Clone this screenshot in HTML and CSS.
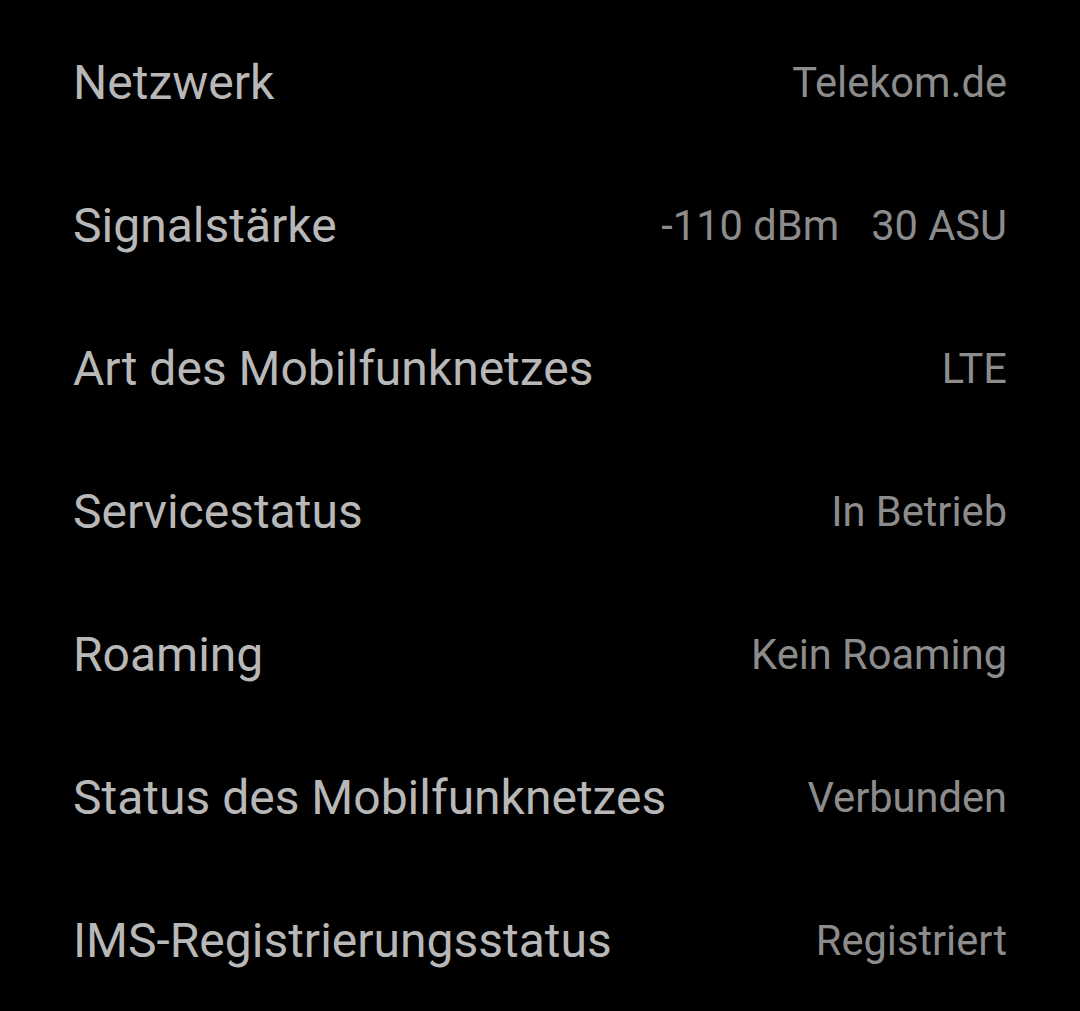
FILE: index.html
```html
<!DOCTYPE html>
<html lang="de">
<head>
  <meta charset="UTF-8">
  <meta name="viewport" content="width=device-width, initial-scale=1.0">
  <title>Status</title>
  <link rel="stylesheet" href="styles.css">
</head>
<body>
  <div class="list">
    <div class="row">
      <span class="label">Netzwerk</span>
      <span class="value">Telekom.de</span>
    </div>
    <div class="row">
      <span class="label">Signalstärke</span>
      <span class="value"><span>-110 dBm</span><span>30 ASU</span></span>
    </div>
    <div class="row">
      <span class="label">Art des Mobilfunknetzes</span>
      <span class="value">LTE</span>
    </div>
    <div class="row">
      <span class="label">Servicestatus</span>
      <span class="value">In Betrieb</span>
    </div>
    <div class="row">
      <span class="label">Roaming</span>
      <span class="value">Kein Roaming</span>
    </div>
    <div class="row">
      <span class="label">Status des Mobilfunknetzes</span>
      <span class="value">Verbunden</span>
    </div>
    <div class="row">
      <span class="label">IMS-Registrierungsstatus</span>
      <span class="value">Registriert</span>
    </div>
  </div>
</body>
</html>
```
FILE: styles.css
```css
body {
  margin: 0;
  background: #000;
  font-family: Roboto, "Noto Sans", Arial, sans-serif;
}

.list {
  padding: 11px 73px 0;
}

.row {
  height: 143px;
  display: flex;
  align-items: center;
  justify-content: space-between;
}

.label {
  font-size: 48px;
  color: #b8b8b8;
}

.value {
  font-size: 41.6px;
  color: #8c8c8c;
  display: flex;
  gap: 32px;
}
```
